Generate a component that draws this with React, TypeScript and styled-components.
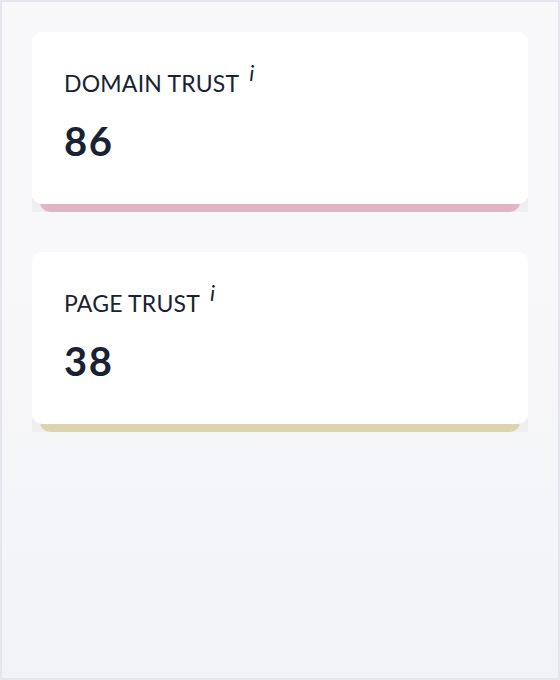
import styled, { createGlobalStyle } from 'styled-components'

const GlobalStyle = createGlobalStyle`
  html, body {
    margin: 0;
    padding: 0;
  }
  body {
    font-family: Lato, "Noto Sans", sans-serif;
    color: #182233;
  }
`

const Frame = styled.div`
  box-sizing: border-box;
  width: 560px;
  height: 680px;
  border: 2px solid #e5e5ed;
  background: linear-gradient(180deg, #f8f8fa 0%, #f8f8fa 40%, #f2f3f7 100%);
  padding: 30px;
  display: flex;
  flex-direction: column;
  gap: 40px;
`

const Tile = styled.div`
  display: flex;
  flex-direction: column;
`

const Body = styled.div`
  position: relative;
  z-index: 1;
  height: 172px;
  box-sizing: border-box;
  background: #ffffff;
  border-radius: 10px;
  padding: 37px 32px 0;
`

const Base = styled.div`
  height: 14px;
  margin-top: -6px;
  background: #efeff2;
  display: flex;
`

const Accent = styled.div<{ $color: string }>`
  flex: 1;
  margin: 0 8px;
  background: ${(p) => p.$color};
  border-radius: 0 0 10px 10px;
`

const Label = styled.div`
  font-size: 23px;
  font-weight: 400;
  letter-spacing: 0.2px;
  line-height: 28px;
  display: flex;
  align-items: flex-start;
  gap: 10px;
`

const Info = styled.span`
  font-style: italic;
  font-size: 22px;
  line-height: 1;
  margin-top: -7px;
`

const Value = styled.div`
  margin-top: 20px;
  font-size: 40px;
  font-weight: 700;
  line-height: 48px;
  letter-spacing: 1.5px;
`

const metrics = [
  { label: 'DOMAIN TRUST', value: 86, color: '#dfb4c4' },
  { label: 'PAGE TRUST', value: 38, color: '#ded3b0' },
]

export default function App() {
  return (
    <>
      <GlobalStyle />
      <Frame>
        {metrics.map((m) => (
          <Tile key={m.label}>
            <Body>
              <Label>
                {m.label}
                <Info>i</Info>
              </Label>
              <Value>{m.value}</Value>
            </Body>
            <Base>
              <Accent $color={m.color} />
            </Base>
          </Tile>
        ))}
      </Frame>
    </>
  )
}
